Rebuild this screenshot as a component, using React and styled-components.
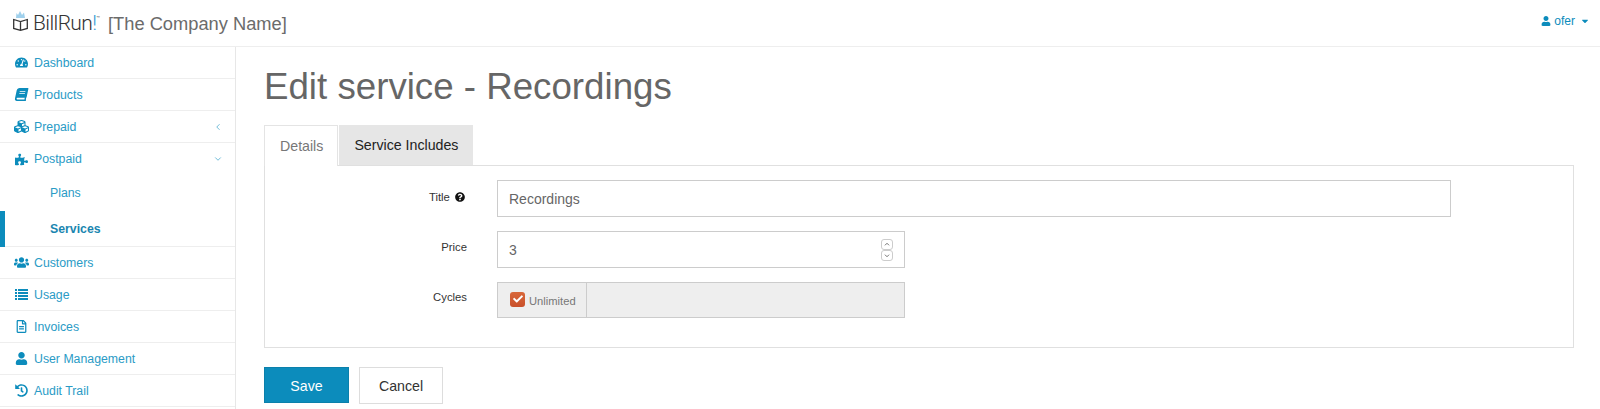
import React from "react";
import styled, { createGlobalStyle } from "styled-components";
import {
  FaTachometerAlt,
  FaBook,
  FaCubes,
  FaPuzzlePiece,
  FaUsers,
  FaRegFileAlt,
  FaUser,
  FaHistory,
  FaQuestionCircle,
  FaCheck,
  FaCaretDown,
} from "react-icons/fa";
import { ChevronLeft, ChevronDown } from "lucide-react";

const GlobalStyle = createGlobalStyle`
  html, body {
    margin: 0;
    padding: 0;
    background: #fff;
    height: 409px;
    overflow: hidden;
    font-family: "Liberation Sans", Arial, sans-serif;
  }
  * { box-sizing: border-box; }
`;

const blue = "#0c8cbc";

export default function App() {
  return (
    <Page>
      <GlobalStyle />
      <TopBar>
        <Brand>
          <LogoMark viewBox="0 0 15 20">
            <path d="M3 7 L3.5 2 L5 4 L7 0 L9 4 L11 1.5 L12 7 Z" fill="#9fd0ec" />
            <path
              d="M0.7 8.5 L7.5 10.5 L14.3 8.5 V17.5 L7.5 19.3 L0.7 17.5 Z M7.5 10.5 V19"
              fill="none"
              stroke="#333"
              strokeWidth="1.3"
            />
          </LogoMark>
          <BrandName>
            BillRun<BrandBang>!</BrandBang>
            <BrandTm>™</BrandTm>
          </BrandName>
          <CompanyName>[The Company Name]</CompanyName>
        </Brand>
        <UserMenu>
          <FaUser size={10} />
          <span>ofer</span>
          <FaCaretDown size={10} />
        </UserMenu>
      </TopBar>
      <Body>
        <Sidebar>
          <NavItem>
            <NavIcon><FaTachometerAlt /></NavIcon>Dashboard
          </NavItem>
          <NavItem>
            <NavIcon><BookIcon /></NavIcon>Products
          </NavItem>
          <NavItem>
            <NavIcon $wide><FaCubes /></NavIcon>Prepaid
            <NavArrow><ChevronLeft size={10} strokeWidth={1.6} /></NavArrow>
          </NavItem>
          <NavGroup>
            <NavHead>
              <NavIcon><FaPuzzlePiece /></NavIcon>Postpaid
              <NavArrow><ChevronDown size={10} strokeWidth={1.6} /></NavArrow>
            </NavHead>
            <SubItem>Plans</SubItem>
            <SubItem $active>Services</SubItem>
          </NavGroup>
          <NavItem>
            <NavIcon $wide><FaUsers /></NavIcon>Customers
          </NavItem>
          <NavItem>
            <NavIcon>
              <svg width="13" height="11" viewBox="0 0 13 11" fill="currentColor">
                <path d="M0 0h2v2H0zM3 0h10v2H3zM0 3h2v2H0zM3 3h10v2H3zM0 6h2v2H0zM3 6h10v2H3zM0 9h2v2H0zM3 9h10v2H3z" />
              </svg>
            </NavIcon>
            Usage
          </NavItem>
          <NavItem>
            <NavIcon><FaRegFileAlt /></NavIcon>Invoices
          </NavItem>
          <NavItem>
            <NavIcon><FaUser /></NavIcon>User Management
          </NavItem>
          <NavItem>
            <NavIcon><FaHistory /></NavIcon>Audit Trail
          </NavItem>
        </Sidebar>
        <Main>
          <Title>Edit service - Recordings</Title>
          <Tabs>
            <Tab $active>Details</Tab>
            <Tab>Service Includes</Tab>
          </Tabs>
          <Panel>
            <FormRow>
              <FieldLabel $top={11}>
                Title <FaQuestionCircle size={10} color="#111" />
              </FieldLabel>
              <TextBox $wide>Recordings</TextBox>
            </FormRow>
            <FormRow>
              <FieldLabel $top={10}>Price</FieldLabel>
              <TextBox>
                3
                <Spinner>
                  <SpinButton viewBox="0 0 12 11">
                    <path d="M3.5 6.5 L6 4 L8.5 6.5" />
                  </SpinButton>
                  <SpinButton viewBox="0 0 12 11">
                    <path d="M3.5 4.5 L6 7 L8.5 4.5" />
                  </SpinButton>
                </Spinner>
              </TextBox>
            </FormRow>
            <FormRow>
              <FieldLabel $top={9}>Cycles</FieldLabel>
              <InputGroup>
                <Addon>
                  <CheckBox><FaCheck size={10} color="#fff" /></CheckBox>
                  Unlimited
                </Addon>
              </InputGroup>
            </FormRow>
          </Panel>
          <Actions>
            <SaveButton>Save</SaveButton>
            <CancelButton>Cancel</CancelButton>
          </Actions>
        </Main>
      </Body>
    </Page>
  );
}

const Page = styled.div`
  width: 1600px;
  height: 409px;
  overflow: hidden;
`;

const TopBar = styled.header`
  height: 47px;
  display: flex;
  align-items: center;
  justify-content: space-between;
  padding: 0 10px 0 13px;
  border-bottom: 1px solid #eeeeee;
`;

const Brand = styled.div`
  display: flex;
  align-items: center;
`;

const LogoMark = styled.svg`
  width: 15px;
  height: 20px;
  margin: -4px 5px 0 0;
`;

const BrandName = styled.span`
  font-family: Roboto, sans-serif;
  font-weight: 300;
  font-size: 21px;
  letter-spacing: -0.6px;
  color: #333;
  width: 75px;
  margin-top: -1px;
  display: flex;
`;

const BrandBang = styled.span`
  color: #3b9ed6;
`;

const BrandTm = styled.span`
  font-size: 6px;
  letter-spacing: 0;
  margin-top: 3px;
`;

const CompanyName = styled.span`
  margin-top: 2px;
  font-size: 18.3px;
  color: #6b6b6b;
`;

const UserMenu = styled.div`
  display: flex;
  align-items: center;
  gap: 3px;
  font-size: 12px;
  color: ${blue};
  margin-top: -4px;
  span { margin-right: 2px; }
`;

const Body = styled.div`
  display: flex;
  height: 362px;
`;

const Sidebar = styled.nav`
  width: 236px;
  flex: none;
  border-right: 1px solid #e7e7e7;
`;

const NavItem = styled.div`
  height: 32px;
  padding: 0 15px;
  display: flex;
  align-items: center;
  font-size: 12.3px;
  color: #2a9bc6;
  border-bottom: 1px solid #eeeeee;
`;

const NavHead = styled(NavItem)`
  border-bottom: none;
`;

const NavGroup = styled.div`
  height: 104px;
  border-bottom: 1px solid #eeeeee;
`;

const NavIcon = styled.span`
  width: 19px;
  flex: none;
  display: inline-flex;
  align-items: center;
  font-size: ${(p) => (p.$wide ? "15px" : "13px")};
  margin-left: ${(p) => (p.$wide ? "-1px" : "0")};
  margin-right: ${(p) => (p.$wide ? "1px" : "0")};
  color: ${blue};
`;

const BookIcon = styled(FaBook)`
  transform: skewX(-12deg);
`;

const NavArrow = styled.span`
  margin-left: auto;
  margin-right: -3px;
  display: inline-flex;
  color: #2a9bc6;
`;

const SubItem = styled.div`
  height: 36px;
  display: flex;
  align-items: center;
  font-size: 12.3px;
  font-weight: ${(p) => (p.$active ? 700 : 400)};
  color: ${(p) => (p.$active ? "#1a86b0" : "#2a9bc6")};
  border-left: ${(p) => (p.$active ? `5px solid ${blue}` : "none")};
  padding-left: ${(p) => (p.$active ? "45px" : "50px")};
`;

const Main = styled.main`
  flex: 1;
  padding: 0 26px 0 28px;
`;

const Title = styled.h1`
  margin: 20px 0 0;
  font-size: 36.7px;
  line-height: 40px;
  font-weight: 400;
  color: #666;
`;

const Tabs = styled.div`
  display: flex;
  gap: 1px;
  margin-top: 18px;
`;

const Tab = styled.div`
  display: flex;
  align-items: center;
  padding: ${(p) => (p.$active ? "0 14px 0 15px" : "0 15px")};
  font-size: 14.2px;
  color: ${(p) => (p.$active ? "#777" : "#222")};
  background: ${(p) => (p.$active ? "#fff" : "#e6e6e6")};
  border: ${(p) => (p.$active ? "1px solid #e4e4e4" : "none")};
  border-bottom: none;
  margin-bottom: ${(p) => (p.$active ? "-1px" : "0")};
  height: ${(p) => (p.$active ? "41px" : "40px")};
  position: relative;
  z-index: 1;
`;

const Panel = styled.div`
  height: 183px;
  border: 1px solid #e0e0e0;
  padding: 14px 0 0;
  display: flex;
  flex-direction: column;
  gap: 14px;
`;

const FormRow = styled.div`
  display: flex;
  align-items: flex-start;
`;

const FieldLabel = styled.div`
  width: 232px;
  flex: none;
  padding: ${(p) => p.$top}px 30px 0 0;
  text-align: right;
  font-size: 11.3px;
  color: #333;
  svg { vertical-align: -1px; margin: 0 2px 0 2px; }
`;

const TextBox = styled.div`
  width: ${(p) => (p.$wide ? "954px" : "408px")};
  height: 37px;
  border: 1px solid #ccc;
  padding: 0 11px;
  display: flex;
  align-items: center;
  justify-content: space-between;
  font-size: 14px;
  color: #666;
`;

const Spinner = styled.div`
  display: flex;
  flex-direction: column;
`;

const SpinButton = styled.svg`
  width: 12px;
  height: 11px;
  border: 1px solid #ccc;
  border-radius: 3px;
  path {
    fill: none;
    stroke: #555;
    stroke-width: 1;
  }
`;

const InputGroup = styled.div`
  width: 408px;
  height: 36px;
  border: 1px solid #ccc;
  background: #eeeeee;
  display: flex;
`;

const Addon = styled.div`
  width: 89px;
  display: flex;
  align-items: center;
  gap: 4px;
  padding-left: 12px;
  padding-top: 1px;
  font-size: 11.2px;
  color: #777;
  border-right: 1px solid #ccc;
`;

const CheckBox = styled.span`
  width: 15px;
  height: 15px;
  flex: none;
  margin-top: -3px;
  border-radius: 3px;
  background: linear-gradient(#d8673a, #c9502a);
  display: inline-flex;
  align-items: center;
  justify-content: center;
`;

const Actions = styled.div`
  display: flex;
  gap: 10px;
  margin-top: 19px;
`;

const SaveButton = styled.button`
  width: 85px;
  height: 36px;
  padding-top: 2px;
  border: 1px solid #0b80ab;
  background: ${blue};
  color: #fff;
  font: 14.2px "Liberation Sans", Arial, sans-serif;
`;

const CancelButton = styled.button`
  width: 84px;
  height: 37px;
  border: 1px solid #ddd;
  background: #fff;
  color: #333;
  font: 14.2px "Liberation Sans", Arial, sans-serif;
`;
